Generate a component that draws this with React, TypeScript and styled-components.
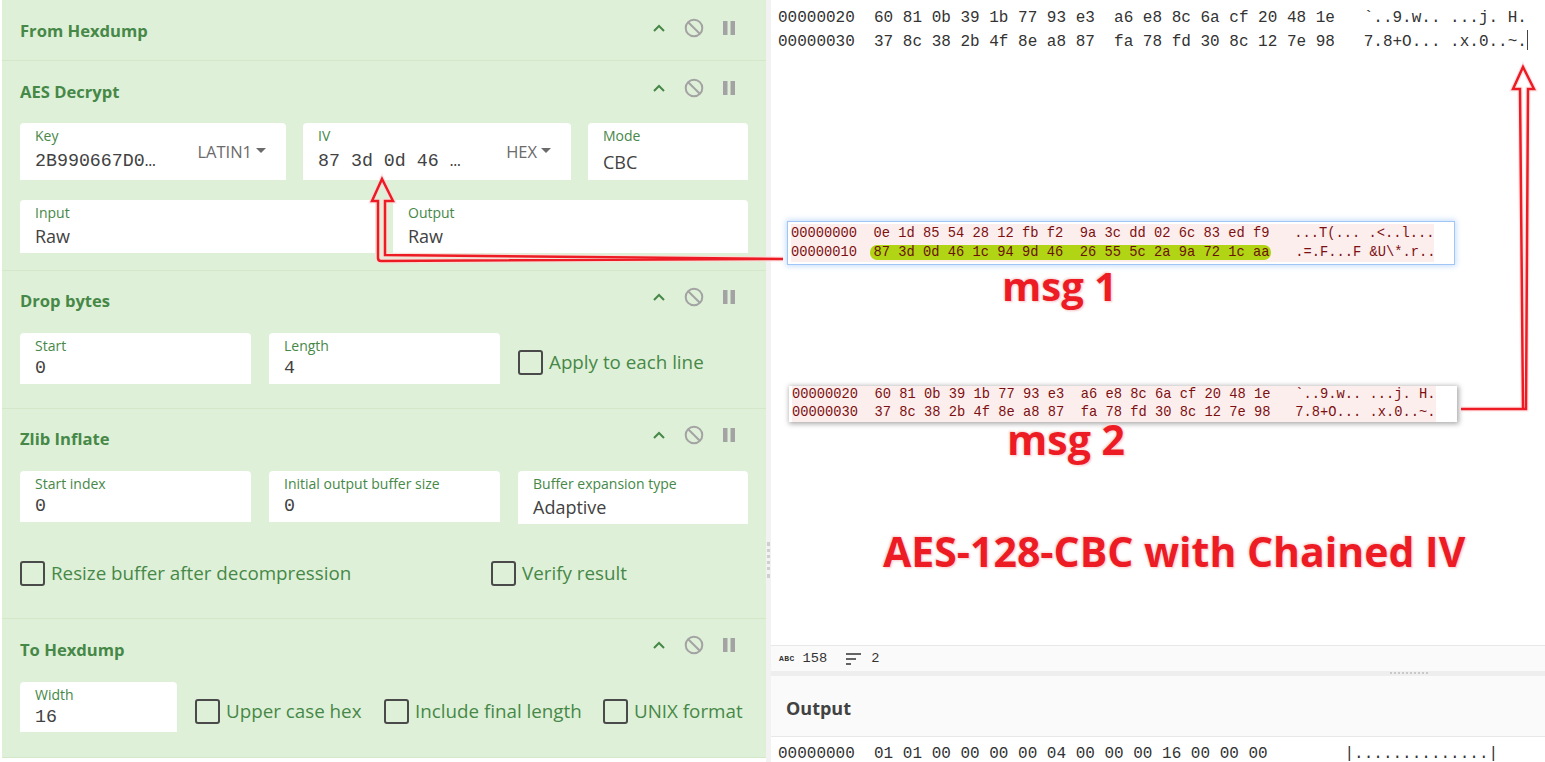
import React from 'react';
import styled, { createGlobalStyle } from 'styled-components';

const GlobalStyle = createGlobalStyle`
  html, body {
    margin: 0;
    padding: 0;
    background: #fff;
    overflow: hidden;
  }
  #root {
    height: 762px;
  }
`;

const Page = styled.div`
  position: relative;
  display: flex;
  width: 1545px;
  height: 762px;
  overflow: hidden;
  font-family: "Open Sans", "Noto Sans", sans-serif;
`;

const Recipe = styled.div`
  width: 766px;
  flex: none;
  padding-left: 2px;
  box-sizing: border-box;
`;

const Operation = styled.section<{ $height: number }>`
  height: ${p => p.$height}px;
  box-sizing: border-box;
  padding: 0 18px;
  background: #dff0d8;
  border-bottom: 1px solid #d3e8c8;
`;

const OpHeader = styled.div<{ $height: number; $pb?: number }>`
  display: flex;
  align-items: center;
  justify-content: space-between;
  height: ${p => p.$height}px;
  box-sizing: border-box;
  padding-bottom: ${p => p.$pb ?? 0}px;
`;

const OpTitle = styled.h3`
  margin: 0;
  font-size: 16.6px;
  font-weight: 700;
  color: #468847;
`;

const OpIcons = styled.div<{ $lift: number }>`
  display: flex;
  align-items: center;
  gap: 13px;
  margin: -${p => p.$lift}px 8px 0 0;
`;

const IconSlot = styled.span`
  display: flex;
  justify-content: center;
  width: 22px;
`;

const Row = styled.div<{ $gap?: number; $mb?: number }>`
  display: flex;
  align-items: flex-start;
  gap: ${p => p.$gap ?? 18}px;
  margin-bottom: ${p => p.$mb ?? 0}px;
`;

const Field = styled.div<{ $width: number; $height: number }>`
  position: relative;
  flex: none;
  width: ${p => p.$width}px;
  height: ${p => p.$height}px;
  box-sizing: border-box;
  padding: 4px 15px 0;
  background: #fff;
  border-radius: 4px 4px 0 0;
`;

const FieldLabel = styled.div`
  font-size: 14px;
  line-height: 18px;
  color: #468847;
`;

const FieldValue = styled.div<{ $mono?: boolean; $gap: number }>`
  margin-top: ${p => p.$gap}px;
  font-family: ${p => (p.$mono ? '"Liberation Mono", monospace' : '"Open Sans", sans-serif')};
  font-size: ${p => (p.$mono ? 18.3 : 18)}px;
  line-height: 26px;
  color: #424242;
  white-space: pre;
`;

const Toggle = styled.span`
  position: absolute;
  right: 20px;
  top: 17px;
  display: flex;
  align-items: center;
  gap: 4px;
  font-size: 16.5px;
  line-height: 24px;
  color: #6b6b6b;

  &::after {
    content: '';
    margin-bottom: 3px;
    border-left: 5px solid transparent;
    border-right: 5px solid transparent;
    border-top: 5px solid #6b6b6b;
  }
`;

const CheckLabel = styled.label<{ $width?: number; $mt?: number }>`
  display: flex;
  flex: none;
  align-items: center;
  gap: 6px;
  width: ${p => (p.$width ? `${p.$width}px` : 'auto')};
  margin-top: ${p => p.$mt ?? 0}px;
  font-size: 18.8px;
  line-height: 28px;
  color: #468847;
  white-space: nowrap;
`;

const CheckBox = styled.span`
  flex: none;
  width: 21px;
  height: 21px;
  border: 2px solid #4a4a4a;
  border-radius: 3px;
`;

const RecipeTail = styled.div`
  height: 4px;
  background: #fff;
`;

const Gutter = styled.div`
  position: relative;
  flex: none;
  width: 5px;
  background: #f2f2f2;

  &::after {
    content: '';
    position: absolute;
    top: 542px;
    left: 1px;
    height: 36px;
    border-left: 3px dotted #cfcfcf;
  }
`;

const Panels = styled.div`
  flex: 1;
  display: flex;
  flex-direction: column;
  min-width: 0;
`;

const InputArea = styled.div`
  flex: none;
  height: 645px;
  box-sizing: border-box;
  padding: 7px 0 0 7px;
  background: #fff;
`;

const HexLines = styled.pre`
  margin: 0;
  font-family: "Liberation Mono", monospace;
  font-size: 16px;
  line-height: 23px;
  color: #333;
`;

const Caret = styled.span`
  display: inline-block;
  width: 1px;
  height: 20px;
  margin-bottom: -4px;
  background: #444;
`;

const SnippetSlot = styled.div<{ $top: number; $left: number; $width: number }>`
  width: ${p => p.$width}px;
  margin: ${p => p.$top}px 0 0 ${p => p.$left}px;
`;

const Snippet = styled.div<{ $blue?: boolean }>`
  box-sizing: border-box;
  padding: ${p => (p.$blue ? '2px 20px 2px 3px' : '0 21px 0 3px')};
  background: #fff;
  box-shadow: ${p => (p.$blue
    ? '0 0 0 1px #9fc6f7, 0 0 6px 2px #c4dbf9'
    : '1px 1px 5px 1px #aaa')};
`;

const SnippetLines = styled.pre<{ $line: number }>`
  margin: 0;
  background: #fdeeee;
  font-family: "Liberation Mono", monospace;
  font-size: 13.75px;
  line-height: ${p => p.$line}px;
  color: #7c1010;
`;

const Highlight = styled.mark`
  margin-left: -4px;
  padding: 0 1px 0 4px;
  border-radius: 7px;
  background: #b1d514;
  color: #6a1206;
`;

const Annotation = styled.div<{ $size: number; $top: number; $left: number }>`
  width: max-content;
  margin: ${p => p.$top}px 0 0 ${p => p.$left}px;
  font-family: "Open Sans", sans-serif;
  font-size: ${p => p.$size}px;
  font-weight: 700;
  line-height: 0.9;
  color: #ed1c24;
  text-shadow: 0 0 3px #fff, 1px 1px 2px #f3b5b5, -1px -1px 2px #f3c5c5;
`;

const StatusBar = styled.div`
  flex: none;
  display: flex;
  align-items: center;
  gap: 18px;
  height: 26px;
  box-sizing: border-box;
  padding: 0 8px;
  background: #fafafa;
  border-top: 1px solid #e8e8e8;
  font-family: "Liberation Mono", monospace;
  font-size: 13.7px;
  color: #333;
`;

const StatusItem = styled.span`
  display: flex;
  align-items: center;
  gap: 8px;
`;

const AbcTag = styled.b`
  font-size: 8px;
  letter-spacing: 0.4px;
`;

const Divider = styled.div`
  position: relative;
  flex: none;
  height: 5px;
  background: #eee;

  &::after {
    content: '';
    position: absolute;
    top: 1px;
    left: 619px;
    width: 38px;
    border-top: 2px dotted #c8c8c8;
  }
`;

const OutputHeader = styled.div`
  flex: none;
  display: flex;
  align-items: center;
  height: 61px;
  box-sizing: border-box;
  padding: 3px 0 0 15px;
  background: #fafafa;
  border-bottom: 1px solid #e8e8e8;
  font-size: 18px;
  font-weight: 700;
  color: #424242;
`;

const OutputLines = styled(HexLines)`
  flex: none;
  padding: 6px 0 0 7px;
  background: #fff;
`;

const ArrowLayer = styled.svg`
  position: absolute;
  top: 0;
  left: 0;
  pointer-events: none;
`;

const Chevron = () => (
  <svg width="14" height="10" viewBox="0 0 14 10" fill="none">
    <path d="M2 8 L7 3 L12 8" stroke="#468847" strokeWidth="2" />
  </svg>
);

const BanIcon = () => (
  <svg width="20" height="20" viewBox="0 0 20 20" fill="none">
    <circle cx="10" cy="10" r="8.3" stroke="#a3a3a3" strokeWidth="2" />
    <path d="M4.2 4.2 L15.8 15.8" stroke="#a3a3a3" strokeWidth="2" />
  </svg>
);

const PauseIcon = () => (
  <svg width="14" height="14" viewBox="0 0 14 14">
    <rect x="1" y="0" width="4.5" height="14" fill="#a3a3a3" />
    <rect x="8.5" y="0" width="4.5" height="14" fill="#a3a3a3" />
  </svg>
);

const LinesIcon = () => (
  <svg width="18" height="14" viewBox="0 0 18 14" fill="none" stroke="#333" strokeWidth="1.4">
    <path d="M1 2 H16 M1 7 H11 M1 12 H6" />
  </svg>
);

const Header = ({ title, height = 62, pb, lift = 8 }: {
  title: string; height?: number; pb?: number; lift?: number;
}) => (
  <OpHeader $height={height} $pb={pb}>
    <OpTitle>{title}</OpTitle>
    <OpIcons $lift={lift}>
      <IconSlot><Chevron /></IconSlot>
      <IconSlot><BanIcon /></IconSlot>
      <IconSlot><PauseIcon /></IconSlot>
    </OpIcons>
  </OpHeader>
);

const Arg = ({ label, value, width, height = 51, mono, toggle, gap = 1 }: {
  label: string; value: string; width: number; height?: number; mono?: boolean; toggle?: string; gap?: number;
}) => (
  <Field $width={width} $height={height}>
    <FieldLabel>{label}</FieldLabel>
    <FieldValue $mono={mono} $gap={gap}>{value}</FieldValue>
    {toggle && <Toggle>{toggle}</Toggle>}
  </Field>
);

const Check = ({ label, width, mt }: { label: string; width?: number; mt?: number }) => (
  <CheckLabel $width={width} $mt={mt}>
    <CheckBox />
    {label}
  </CheckLabel>
);

const App = () => (
  <Page>
    <GlobalStyle />
    <Recipe>
      <Operation $height={61}>
        <Header title="From Hexdump" height={61} lift={6} />
      </Operation>

      <Operation $height={210}>
        <Header title="AES Decrypt" pb={2} lift={6} />
        <Row $gap={17} $mb={20}>
          <Arg label="Key" value="2B990667D0…" width={266} height={57} mono toggle="LATIN1" gap={3} />
          <Arg label="IV" value="87 3d 0d 46 …" width={268} height={57} mono toggle="HEX" gap={3} />
          <Arg label="Mode" value="CBC" width={160} height={57} gap={4} />
        </Row>
        <Row>
          <Arg label="Input" value="Raw" width={355} height={53} />
          <Arg label="Output" value="Raw" width={355} height={53} />
        </Row>
      </Operation>

      <Operation $height={138}>
        <Header title="Drop bytes" pb={4} lift={6} />
        <Row>
          <Arg label="Start" value="0" width={231} mono gap={0} />
          <Arg label="Length" value="4" width={231} mono gap={0} />
          <Check label="Apply to each line" mt={15} />
        </Row>
      </Operation>

      <Operation $height={210}>
        <Header title="Zlib Inflate" pb={4} lift={6} />
        <Row $mb={35}>
          <Arg label="Start index" value="0" width={231} mono gap={0} />
          <Arg label="Initial output buffer size" value="0" width={231} mono gap={0} />
          <Arg label="Buffer expansion type" value="Adaptive" width={230} height={53} />
        </Row>
        <Row $gap={0}>
          <Check label="Resize buffer after decompression" width={471} />
          <Check label="Verify result" />
        </Row>
      </Operation>

      <Operation $height={139}>
        <Header title="To Hexdump" height={63} pb={3} />
        <Row>
          <Arg label="Width" value="16" width={157} height={50} mono gap={0} />
          <Check label="Upper case hex" width={171} mt={15} />
          <Check label="Include final length" width={201} mt={15} />
          <Check label="UNIX format" mt={15} />
        </Row>
      </Operation>
      <RecipeTail />
    </Recipe>

    <Gutter />

    <Panels>
      <InputArea>
        <HexLines>
          {'00000020  60 81 0b 39 1b 77 93 e3  a6 e8 8c 6a cf 20 48 1e   `..9.w.. ...j. H.\n'}
          {'00000030  37 8c 38 2b 4f 8e a8 87  fa 78 fd 30 8c 12 7e 98   7.8+O... .x.0..~.'}
          <Caret />
        </HexLines>

        <SnippetSlot $top={168} $left={10} $width={666}>
          <Snippet $blue>
            <SnippetLines $line={19}>
              {'00000000  0e 1d 85 54 28 12 fb f2  9a 3c dd 02 6c 83 ed f9   ...T(... .<..l...\n'}
              {'00000010  '}
              <Highlight>87 3d 0d 46 1c 94 9d 46  26 55 5c 2a 9a 72 1c aa</Highlight>
              {'   .=.F...F &U\\*.r..'}
            </SnippetLines>
          </Snippet>
        </SnippetSlot>
        <Annotation $size={40} $top={4} $left={224}>msg 1</Annotation>

        <SnippetSlot $top={82} $left={11} $width={668}>
          <Snippet>
            <SnippetLines $line={18}>
              {'00000020  60 81 0b 39 1b 77 93 e3  a6 e8 8c 6a cf 20 48 1e   `..9.w.. ...j. H.\n'}
              {'00000030  37 8c 38 2b 4f 8e a8 87  fa 78 fd 30 8c 12 7e 98   7.8+O... .x.0..~.'}
            </SnippetLines>
          </Snippet>
        </SnippetSlot>
        <Annotation $size={41} $top={-1} $left={229}>msg 2</Annotation>

        <Annotation $size={41} $top={75} $left={105}>AES-128-CBC with Chained IV</Annotation>
      </InputArea>

      <StatusBar>
        <StatusItem><AbcTag>ABC</AbcTag>158</StatusItem>
        <StatusItem><LinesIcon />2</StatusItem>
      </StatusBar>
      <Divider />
      <OutputHeader>Output</OutputHeader>
      <OutputLines>{'00000000  01 01 00 00 00 00 04 00 00 00 16 00 00 00        |..............|'}</OutputLines>
    </Panels>

    <ArrowLayer width="1545" height="762" viewBox="0 0 1545 762" fill="none">
      <g stroke="#ffd9d9" strokeWidth="5" opacity="0.7">
        <path d="M783 259 L385 255 V201 H393 L382 179 L372 201 H378 V258 Q378 261 381 261 L783 259" />
        <path d="M1461 409 H1526 L1528 89 H1534 L1523 67 L1513 89 H1520 L1523 409" />
      </g>
      <g stroke="#ed1c24" strokeWidth="2.5">
        <path d="M783 259 L385 255 V201 H393 L382 179 L372 201 H378 V258 Q378 261 381 261 L783 259" />
        <path d="M1461 409 H1526 L1528 89 H1534 L1523 67 L1513 89 H1520 L1523 409" />
      </g>
    </ArrowLayer>
  </Page>
);

export default App;
